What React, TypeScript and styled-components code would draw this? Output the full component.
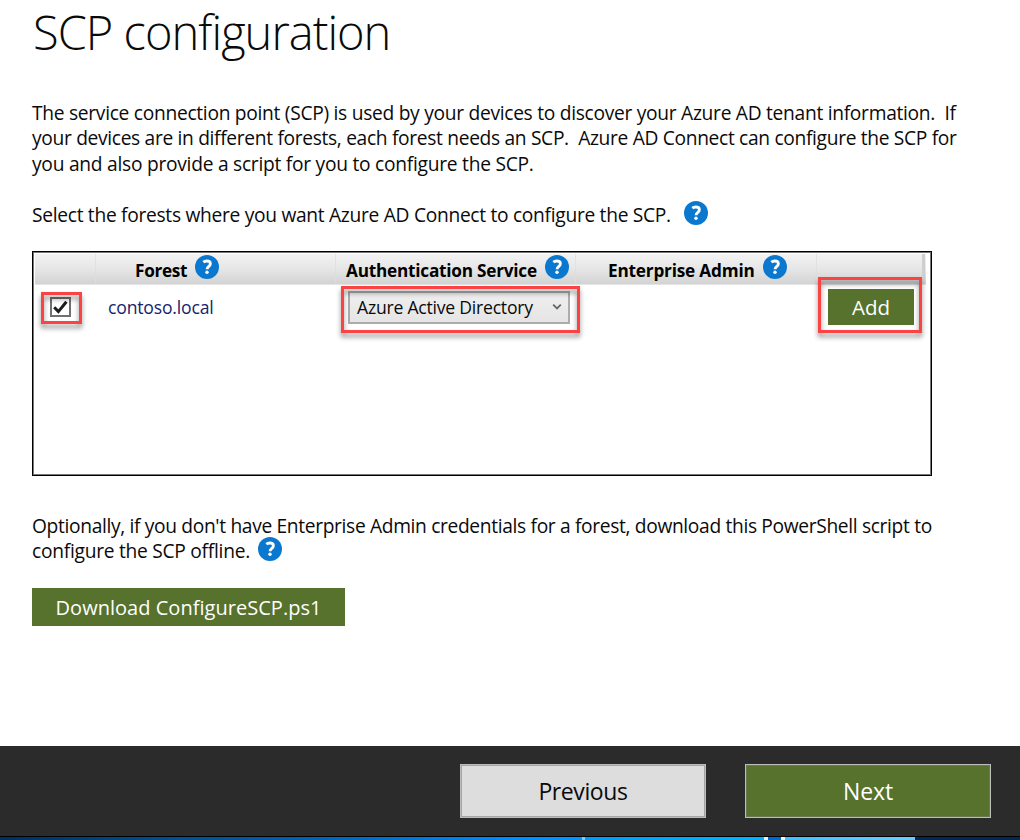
import React from "react";
import styled, { createGlobalStyle } from "styled-components";

const GlobalStyle = createGlobalStyle`
  * { box-sizing: border-box; }
  body {
    margin: 0;
    background: #fff;
    color: #0a0a0a;
    font-family: "Open Sans", "Noto Sans", sans-serif;
    overflow: hidden;
  }
`;

const Page = styled.div`
  display: flex;
  flex-direction: column;
  width: 1020px;
  height: 840px;
`;

const Content = styled.main`
  flex: 1;
  padding-left: 32px;
`;

const Title = styled.h1`
  margin: 0 0 35.9px 1px;
  font-size: 47px;
  font-weight: 300;
  line-height: 64px;
  letter-spacing: -0.97px;
  white-space: pre;
`;

const Paragraph = styled.div<{ $top?: number }>`
  margin-top: ${(p) => p.$top ?? 0}px;
  font-size: 19.2px;
  line-height: 25.5px;
`;

const Line = styled.div<{ $track: number }>`
  display: flex;
  height: 25.5px;
  white-space: pre;
  letter-spacing: ${(p) => p.$track}px;
`;

const HelpSvg = styled.svg<{ $left: number; $lift: number }>`
  flex: none;
  display: block;
  width: 24px;
  height: 24px;
  margin-left: ${(p) => p.$left}px;
  margin-top: ${(p) => p.$lift}px;
`;

const ForestTable = styled.section`
  width: 900px;
  height: 225px;
  margin-top: 23.9px;
  padding: 1px;
  border: 1px solid #000;
  box-shadow: inset 1px 1px 0 #777, inset -1px -1px 0 #777;
`;

const columns = "61px 240px 240px 241px 108px";

const HeaderRow = styled.div`
  display: grid;
  grid-template-columns: ${columns};
  width: 891px;
  height: 31px;
  margin: 1px 0 0 1px;
  background: linear-gradient(#f3f3f3, #e6e6e6 50%, #d3d3d3);
  border-bottom: 1px solid #e4e4e4;
`;

const HeaderCell = styled.div<{ $left?: number; $track?: number; $last?: boolean }>`
  display: flex;
  height: 30px;
  padding-left: ${(p) => p.$left ?? 0}px;
  border-right: ${(p) =>
    p.$last ? "3px solid #cfcfcf" : "1px solid rgba(222, 222, 222, 0.75)"};
  color: #000;
  font-size: 17.2px;
  font-weight: 700;
  line-height: 34px;
  letter-spacing: ${(p) => p.$track ?? 0}px;
  white-space: pre;
`;

const ForestRow = styled.div`
  display: grid;
  grid-template-columns: ${columns};
  margin-left: 1px;
  height: 48px;
`;

const Cell = styled.div<{ $left: number; $top: number }>`
  padding: ${(p) => p.$top}px 0 0 ${(p) => p.$left}px;
`;

const Anchor = styled.div`
  position: relative;
  width: fit-content;
`;

const Highlight = styled.div<{ $t: number; $r: number; $b: number; $l: number }>`
  position: absolute;
  top: ${(p) => -p.$t}px;
  right: ${(p) => -p.$r}px;
  bottom: ${(p) => -p.$b}px;
  left: ${(p) => -p.$l}px;
  border: 3px solid #fb4343;
  filter: drop-shadow(0 4px 2.5px rgba(0, 0, 0, 0.45));
  pointer-events: none;
`;

const CheckBox = styled.div`
  display: grid;
  place-items: center;
  width: 21px;
  height: 20px;
  border: 2px solid #707070;
  background: #fff;
`;

const ForestName = styled.span`
  display: block;
  color: #14246e;
  font-size: 17.6px;
  line-height: 24px;
  letter-spacing: -0.18px;
`;

const Dropdown = styled.div`
  display: flex;
  align-items: center;
  justify-content: space-between;
  width: 222px;
  height: 33px;
  padding: 0 6px 0 7px;
  border: 2px solid #acacac;
  background: linear-gradient(#efefef, #e5e5e5);
  font-size: 17.6px;
  line-height: 29px;
  letter-spacing: -0.23px;
  white-space: pre;
`;

const GreenButton = styled.button<{ $w: number; $h: number; $top?: number; $drop?: number; $size: number }>`
  display: block;
  width: ${(p) => p.$w}px;
  height: ${(p) => p.$h}px;
  margin: ${(p) => p.$top ?? 0}px 0 0;
  padding: ${(p) => p.$drop ?? 0}px 0 0;
  border: 0;
  background: #56722c;
  color: #fff;
  font-family: inherit;
  font-size: ${(p) => p.$size}px;
  line-height: ${(p) => p.$h - (p.$drop ?? 0)}px;
  letter-spacing: 0.03px;
  white-space: pre;
`;

const Footer = styled.footer`
  display: flex;
  justify-content: flex-end;
  gap: 39px;
  height: 90px;
  padding: 18px 29px 0 0;
  background: #2b2b2b;
`;

const NavButton = styled.button<{ $primary?: boolean }>`
  width: 246px;
  height: 54px;
  padding: 0;
  border: 1px solid #bcbcbc;
  box-shadow: inset 0 0 0 1px ${(p) => (p.$primary ? "#677a4c" : "#a5a5a5")};
  background: ${(p) => (p.$primary ? "#56722c" : "#dddddd")};
  color: ${(p) => (p.$primary ? "#fff" : "#0a0a0a")};
  font-family: inherit;
  font-size: 23px;
  line-height: 52px;
  letter-spacing: ${(p) => (p.$primary ? -0.15 : -0.4)}px;
`;

const Desktop = styled.div`
  display: flex;
  height: 4px;
  border-top: 1px solid #000;
`;

const Strip = styled.div<{ $w: number; $bg: string }>`
  width: ${(p) => p.$w}px;
  background: ${(p) => p.$bg};
`;

function Help({ left, lift }: { left: number; lift: number }) {
  return (
    <HelpSvg $left={left} $lift={lift} viewBox="0 0 24 24" role="img" aria-label="Help">
      <circle cx="12" cy="12" r="12" fill="#0b78cf" />
      <path
        d="M8.3 7.2C9.3 6.4 10.5 6 11.7 6c2.3 0 3.7 1 3.7 2.8 0 1.4-.8 2.1-1.8 2.9-1 .8-1.5 1.2-1.5 2.5"
        fill="none"
        stroke="#fff"
        strokeWidth="2.8"
      />
      <circle cx="12" cy="17.3" r="1.7" fill="#fff" />
    </HelpSvg>
  );
}

export default function App() {
  return (
    <Page>
      <GlobalStyle />
      <Content>
        <Title>SCP configuration</Title>
        <Paragraph>
          <Line $track={-0.287}>
            {"The service connection point (SCP) is used by your devices to discover your Azure AD tenant information.  If"}
          </Line>
          <Line $track={-0.324}>
            {"your devices are in different forests, each forest needs an SCP.  Azure AD Connect can configure the SCP for"}
          </Line>
          <Line $track={-0.257}>you and also provide a script for you to configure the SCP.</Line>
        </Paragraph>
        <Paragraph $top={25.2}>
          <Line $track={-0.295}>
            Select the forests where you want Azure AD Connect to configure the SCP.
            <Help left={13.5} lift={-0.6} />
          </Line>
        </Paragraph>
        <ForestTable>
          <HeaderRow>
            <HeaderCell />
            <HeaderCell $left={39} $track={-0.3}>
              Forest
              <Help left={8} lift={1} />
            </HeaderCell>
            <HeaderCell $left={10} $track={-0.225}>
              Authentication Service
              <Help left={8} lift={1} />
            </HeaderCell>
            <HeaderCell $left={32} $track={-0.19}>
              Enterprise Admin
              <Help left={8.5} lift={1} />
            </HeaderCell>
            <HeaderCell $last />
          </HeaderRow>
          <ForestRow>
            <Cell $left={15} $top={12}>
              <Anchor>
                <CheckBox>
                  <svg width="15" height="14" viewBox="0 0 15 14" aria-hidden="true">
                    <path d="M1.2 7.2 5.4 11.6 13.4 1.8" fill="none" stroke="#1c1c1c" strokeWidth="3" />
                  </svg>
                </CheckBox>
                <Highlight $t={5} $r={11} $b={7} $l={9} />
              </Anchor>
            </Cell>
            <Cell $left={12} $top={10}>
              <ForestName>contoso.local</ForestName>
            </Cell>
            <Cell $left={12} $top={6}>
              <Anchor>
                <Dropdown>
                  Azure Active Directory
                  <svg width="10" height="8" viewBox="0 0 10 8" aria-hidden="true">
                    <path d="M1.2 1.6 5 5.4 8.8 1.6" fill="none" stroke="#666" strokeWidth="1.8" />
                  </svg>
                </Dropdown>
                <Highlight $t={5} $r={10} $b={9} $l={7} />
              </Anchor>
            </Cell>
            <Cell $left={0} $top={0} />
            <Cell $left={11} $top={4}>
              <Anchor>
                <GreenButton $w={86} $h={36} $size={20.5}>
                  Add
                </GreenButton>
                <Highlight $t={12} $r={8} $b={8} $l={10} />
              </Anchor>
            </Cell>
          </ForestRow>
        </ForestTable>
        <Paragraph $top={36.9}>
          <Line $track={-0.338}>
            {"Optionally, if you don't have Enterprise Admin credentials for a forest, download this PowerShell script to"}
          </Line>
          <Line $track={-0.265}>
            configure the SCP offline.
            <Help left={8} lift={-1.4} />
          </Line>
        </Paragraph>
        <GreenButton $w={313} $h={38} $top={24.1} $drop={2} $size={20}>
          Download ConfigureSCP.ps1
        </GreenButton>
      </Content>
      <Footer>
        <NavButton>Previous</NavButton>
        <NavButton $primary>Next</NavButton>
      </Footer>
      <Desktop>
        <Strip $w={582} $bg="linear-gradient(90deg, #003060, #004c8c 25%, #005fae 50%, #008cff 88%, #0098ff)" />
        <Strip $w={3} $bg="#7fd0ff" />
        <Strip $w={179} $bg="linear-gradient(90deg, #009cf8, #00b4ff)" />
        <Strip $w={4} $bg="#e4f6ff" />
        <Strip $w={13} $bg="#0069d2" />
        <Strip $w={4} $bg="#f2faff" />
        <Strip $w={130} $bg="linear-gradient(90deg, #42beff, #6accff)" />
        <Strip $w={105} $bg="#002a55" />
      </Desktop>
    </Page>
  );
}
